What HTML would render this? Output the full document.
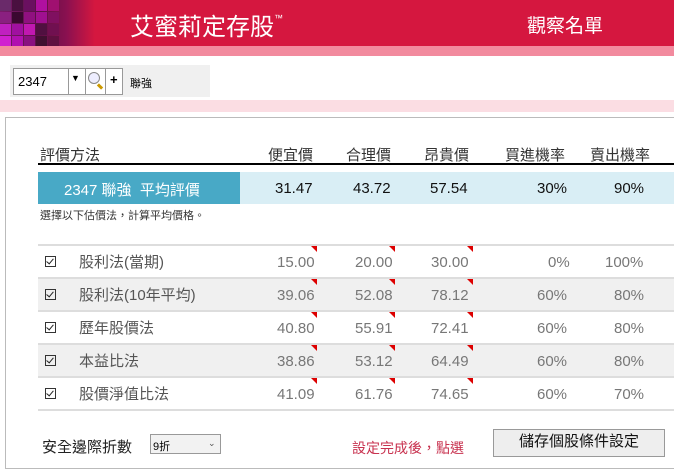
<!DOCTYPE html><html><head><meta charset="utf-8"><style>
body{margin:0;width:674px;height:458px;overflow:hidden;background:#fff;font-family:"Liberation Sans","Noto Sans CJK TC",sans-serif;position:relative}
.a{position:absolute}
.t{color:#fff}
.row{left:38px;width:636px;height:32px;border-top:2px solid #ddd}
.tri{width:0;height:0;border-left:6px solid transparent;border-top:6px solid #d00}
.cb{width:11px;height:11px;border:1px solid #333;box-sizing:border-box}
.cb:after{content:"";position:absolute;left:2px;top:0px;width:3px;height:6px;border:solid #222;border-width:0 1.5px 1.5px 0;transform:rotate(40deg)}
.sq{position:absolute;width:11px;height:11px}
.r span{position:absolute;line-height:18px;top:0}
</style></head><body>
<div class="a" style="left:0;top:0;width:674px;height:46px;background:#d5173f"></div>
<div class="a" style="left:0;top:0;width:95px;height:46px;background:linear-gradient(90deg,#7a1a6a,#5a1045 40%,#8a1050 70%,#d5173f)"></div>
<div class="sq" style="left:0;top:0;background:#6a2a6a"></div><div class="sq" style="left:12px;top:0;background:#4a1040"></div><div class="sq" style="left:24px;top:0;background:#6a1060"></div><div class="sq" style="left:36px;top:0;background:#b010a0"></div><div class="sq" style="left:48px;top:0;background:#a01070"></div>
<div class="sq" style="left:0;top:12px;background:#8a2080"></div><div class="sq" style="left:12px;top:12px;background:#3a0830"></div><div class="sq" style="left:24px;top:12px;background:#901080"></div><div class="sq" style="left:36px;top:12px;background:#a01090"></div><div class="sq" style="left:48px;top:12px;background:#801060"></div>
<div class="sq" style="left:0;top:24px;background:#c020c0"></div><div class="sq" style="left:12px;top:24px;background:#a010a0"></div><div class="sq" style="left:24px;top:24px;background:#c018b0"></div><div class="sq" style="left:36px;top:24px;background:#501040"></div><div class="sq" style="left:48px;top:24px;background:#701050"></div>
<div class="sq" style="left:0;top:36px;height:10px;background:#d020d0"></div><div class="sq" style="left:12px;top:36px;height:10px;background:#b010b0"></div><div class="sq" style="left:24px;top:36px;height:10px;background:#8a1080"></div><div class="sq" style="left:36px;top:36px;height:10px;background:#401030"></div><div class="sq" style="left:48px;top:36px;height:10px;background:#601040"></div>
<div class="a t" style="left:130px;top:7px;font-size:24px">艾蜜莉定存股<sup style="font-size:9px;vertical-align:14px">™</sup></div>
<div class="a t" style="left:527px;top:11px;font-size:19px">觀察名單</div>
<div class="a" style="left:0;top:46px;width:674px;height:10px;background:#f28a9e"></div>
<div class="a" style="left:10px;top:65px;width:200px;height:32px;background:#f0f0f0"></div>
<div class="a" style="left:13px;top:68px;width:110px;height:27px;background:#fff;border:1px solid #999;box-sizing:border-box"></div>
<div class="a" style="left:18px;top:74px;font-size:13px">2347</div>
<div class="a" style="left:68px;top:68px;width:1px;height:27px;background:#999"></div>
<div class="a" style="left:71px;top:73px;font-size:9px">▼</div>
<div class="a" style="left:85px;top:68px;width:1px;height:27px;background:#999"></div>
<div class="a" style="left:88px;top:72px;width:10px;height:10px;border:1.5px solid #888;border-radius:50%;background:#eef"></div>
<div class="a" style="left:97px;top:85px;width:6px;height:3px;background:#c90;transform:rotate(45deg)"></div>
<div class="a" style="left:105px;top:68px;width:1px;height:27px;background:#999"></div>
<div class="a" style="left:110px;top:72px;font-size:13px;font-weight:bold">+</div>
<div class="a" style="left:130px;top:75px;font-size:11px">聯強</div>
<div class="a" style="left:0;top:100px;width:674px;height:12px;background:#fbdde3"></div>
<div class="a" style="left:5px;top:117px;width:680px;height:350px;border:1px solid #bbb"></div>
<div class="a" style="left:40px;top:144px;font-size:15px;color:#333">評價方法</div>
<div class="a" style="left:268px;top:144px;font-size:15px;color:#333">便宜價</div>
<div class="a" style="left:346px;top:144px;font-size:15px;color:#333">合理價</div>
<div class="a" style="left:424px;top:144px;font-size:15px;color:#333">昂貴價</div>
<div class="a" style="left:505px;top:144px;font-size:15px;color:#333">買進機率</div>
<div class="a" style="left:590px;top:144px;font-size:15px;color:#333">賣出機率</div>
<div class="a" style="left:38px;top:163px;width:636px;height:2px;background:#000"></div>
<div class="a" style="left:38px;top:172px;width:636px;height:32px;background:#d9eef5"></div>
<div class="a" style="left:38px;top:172px;width:202px;height:32px;background:#48a9c6"></div>
<div class="a" style="left:64px;top:179px;font-size:15px;color:#fff">2347 聯強&nbsp;&nbsp;平均評價</div>
<div class="a" style="left:0;top:180px;font-size:15px;color:#111;width:674px">
<span class="a" style="left:275px">31.47</span><span class="a" style="left:353px">43.72</span><span class="a" style="left:430px">57.54</span><span class="a" style="left:537px">30%</span><span class="a" style="left:614px">90%</span></div>
<div class="a" style="left:40px;top:207px;font-size:11px;color:#333">選擇以下估價法，計算平均價格。</div>
<div class="a row" style="top:244px"></div>
<div class="a row" style="top:277px;background:#f0f0f0"></div>
<div class="a row" style="top:310px"></div>
<div class="a row" style="top:343px;background:#f0f0f0"></div>
<div class="a row" style="top:376px"></div>
<div class="a" style="left:38px;top:409px;width:636px;height:2px;background:#ddd"></div>
<div class="a cb" style="left:45px;top:256px"></div><div class="a cb" style="left:45px;top:289px"></div><div class="a cb" style="left:45px;top:322px"></div><div class="a cb" style="left:45px;top:355px"></div><div class="a cb" style="left:45px;top:388px"></div>
<div class="a" style="left:0;top:0;width:674px;font-size:15px;color:#777">
<div class="a r" style="top:254px;left:0;width:674px"><span style="left:79px;color:#555">股利法(當期)</span><span style="left:277px">15.00</span><span style="left:355px">20.00</span><span style="left:431px">30.00</span><span style="left:548px">0%</span><span style="left:605px">100%</span></div>
<div class="a r" style="top:287px;left:0;width:674px"><span style="left:79px;color:#555">股利法(10年平均)</span><span style="left:277px">39.06</span><span style="left:355px">52.08</span><span style="left:431px">78.12</span><span style="left:537px">60%</span><span style="left:614px">80%</span></div>
<div class="a r" style="top:320px;left:0;width:674px"><span style="left:79px;color:#555">歷年股價法</span><span style="left:277px">40.80</span><span style="left:355px">55.91</span><span style="left:431px">72.41</span><span style="left:537px">60%</span><span style="left:614px">80%</span></div>
<div class="a r" style="top:353px;left:0;width:674px"><span style="left:79px;color:#555">本益比法</span><span style="left:277px">38.86</span><span style="left:355px">53.12</span><span style="left:431px">64.49</span><span style="left:537px">60%</span><span style="left:614px">80%</span></div>
<div class="a r" style="top:386px;left:0;width:674px"><span style="left:79px;color:#555">股價淨值比法</span><span style="left:277px">41.09</span><span style="left:355px">61.76</span><span style="left:431px">74.65</span><span style="left:537px">60%</span><span style="left:614px">70%</span></div>
</div>
<div class="a tri" style="left:311px;top:246px"></div><div class="a tri" style="left:389px;top:246px"></div><div class="a tri" style="left:467px;top:246px"></div>
<div class="a tri" style="left:311px;top:279px"></div><div class="a tri" style="left:389px;top:279px"></div><div class="a tri" style="left:467px;top:279px"></div>
<div class="a tri" style="left:311px;top:312px"></div><div class="a tri" style="left:389px;top:312px"></div><div class="a tri" style="left:467px;top:312px"></div>
<div class="a tri" style="left:311px;top:345px"></div><div class="a tri" style="left:389px;top:345px"></div><div class="a tri" style="left:467px;top:345px"></div>
<div class="a tri" style="left:311px;top:378px"></div><div class="a tri" style="left:389px;top:378px"></div><div class="a tri" style="left:467px;top:378px"></div>
<div class="a" style="left:42px;top:436px;font-size:15px;color:#222">安全邊際折數</div>
<div class="a" style="left:150px;top:434px;width:71px;height:20px;border:1px solid #999;background:#f2f2f2;font-size:11px;box-sizing:border-box;padding:3px 2px">9折<span style="float:right;font-size:9px;color:#555">⌄&nbsp;</span></div>
<div class="a" style="left:352px;top:438px;font-size:14px;color:#c8324f">設定完成後，點選</div>
<div class="a" style="left:493px;top:429px;width:172px;height:28px;border:1px solid #999;background:#eee;box-sizing:border-box;font-size:15px;text-align:center;line-height:24px;color:#111">儲存個股條件設定</div>
</body></html>
